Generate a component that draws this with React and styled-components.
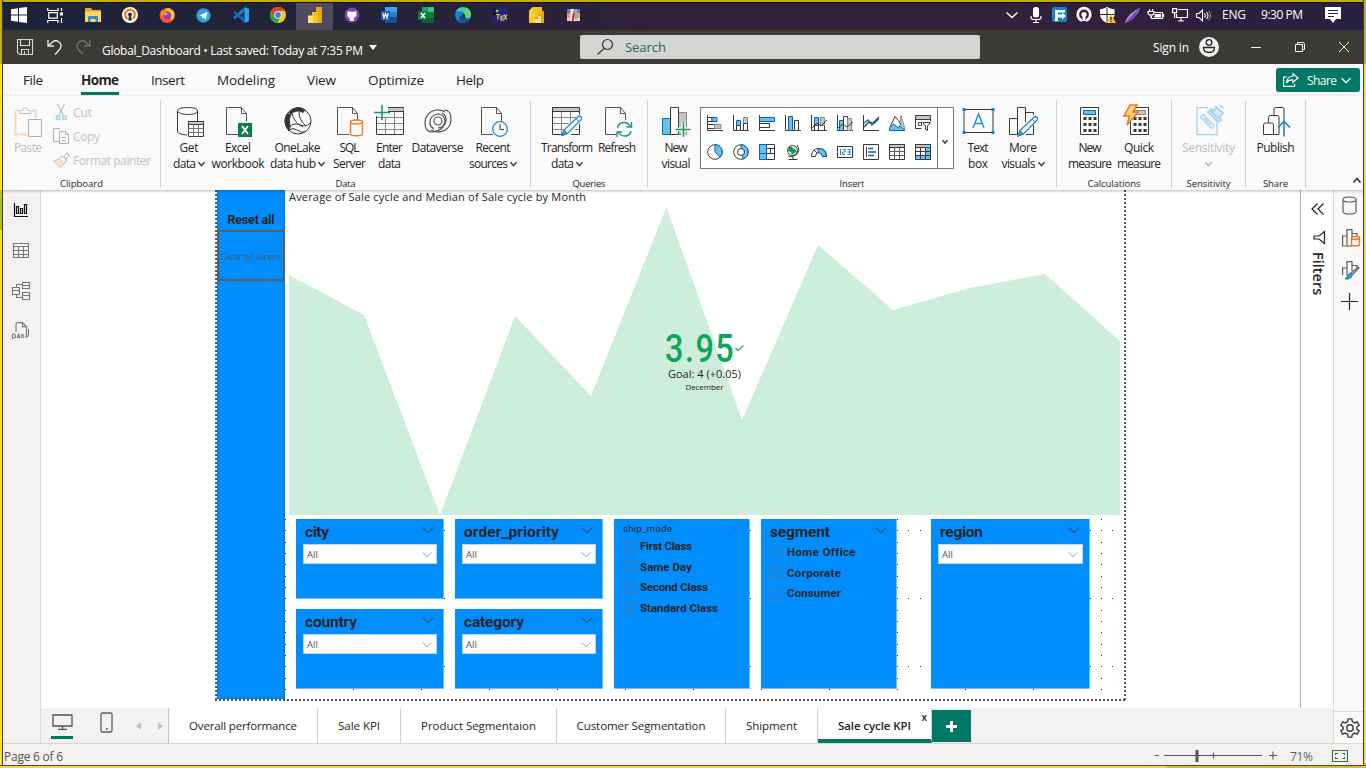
import React, { useLayoutEffect, useRef } from "react";
import styled, { createGlobalStyle, css } from "styled-components";

const GlobalStyle = createGlobalStyle`
  * { box-sizing: border-box; }
  body { margin: 0; background: #fff; font-family: "Open Sans", "Noto Sans", sans-serif; overflow: hidden; }
  svg { display: block; flex: none; overflow: visible; }
`;

/* ---------- text fitted to a set width ---------- */
const FitSpan = styled.span`
  display: inline-block;
  white-space: nowrap;
  width: ${(p) => p.$w}px;
  flex: none;
  text-align: left;
`;
function Fit({ w, children }) {
  const ref = useRef(null);
  useLayoutEffect(() => {
    const el = ref.current;
    el.style.letterSpacing = "0px";
    const range = document.createRange();
    range.selectNodeContents(el);
    const natural = range.getBoundingClientRect().width;
    el.style.letterSpacing = `${(w - natural) / Math.max(1, children.length - 1)}px`;
  }, [w, children]);
  return <FitSpan ref={ref} $w={w}>{children}</FitSpan>;
}

/* ---------- frame ---------- */
const Screen = styled.div`
  position: relative;
  width: 1366px;
  height: 768px;
  display: flex;
  flex-direction: column;
  overflow: hidden;
  background: #fff;
`;
const Edge = styled.div`
  position: absolute;
  pointer-events: none;
  z-index: 20;
  ${(p) => p.$side === "top" && css`top: 0; left: 0; right: 0; height: 3px; background: #c7ad14; border-bottom: 1px solid #14121c;`}
  ${(p) => p.$side === "left" && css`
    top: 0; bottom: 0; left: 0; width: 3px; border-right: 1px solid #3a3a30;
    background: linear-gradient(#c7ad14 64px, #fbdf35 64px, #fbdf35 190px, #b5bd22 190px, #b5bd22 230px, #fbdf35 230px);`}
  ${(p) => p.$side === "right" && css`
    top: 0; bottom: 0; right: 0; width: 3px; border-left: 1px solid #3a3a30;
    background: linear-gradient(#c7ad14 64px, #fbdf35 64px);`}
  ${(p) => p.$side === "bottom" && css`
    bottom: 0; left: 0; right: 0; height: 3px; border-top: 1px solid #4a4a42;
    background: linear-gradient(90deg, #f2dc3c 1167px, #d8c02c 1167px);`}
`;

/* ---------- taskbar ---------- */
const Taskbar = styled.div`
  height: 30px;
  flex: none;
  display: flex;
  align-items: stretch;
  background: linear-gradient(90deg, #1c2438 0%, #24233a 30%, #33203a 52%, #33203a 78%, #27203f 100%);
  color: #fff;
`;
const TaskCell = styled.div`
  width: 37px;
  display: flex;
  align-items: center;
  justify-content: center;
  background: ${(p) => (p.$active ? "#4f4a60" : "transparent")};
`;
const Tray = styled.div`
  margin-left: auto;
  width: 366px;
  display: flex;
  align-items: center;
  font-size: 12px;
`;
const TrayCell = styled.div`
  width: 24px;
  display: flex;
  justify-content: center;
`;
const TrayText = styled.div`
  margin-left: ${(p) => p.$gap}px;
  line-height: 16px;
`;

/* ---------- title bar ---------- */
const TitleBar = styled.div`
  height: 34px;
  flex: none;
  display: flex;
  align-items: center;
  background: #3b3a37;
  color: #fff;
  padding-left: 17px;
`;
const QuickIcons = styled.div`
  display: flex;
  gap: 14px;
  width: 85px;
`;
const FileTitle = styled.div`
  display: flex;
  align-items: center;
  gap: 6px;
  width: 478px;
  font-size: 12px;
  padding-top: 6px;
`;
const Caret = styled.i`
  border: 4.5px solid transparent;
  border-top: 5px solid #fff;
  border-bottom: 0;
  margin-top: -5px;
`;
const SearchBox = styled.div`
  width: 400px;
  height: 24px;
  background: #d4d4d2;
  border-radius: 2px;
  display: flex;
  align-items: center;
  padding-left: 17px;
  gap: 12px;
  font-size: 13px;
  color: #27675a;
`;
const WindowArea = styled.div`
  display: flex;
  align-items: center;
  margin-left: 173px;
  font-size: 12px;
`;
const WindowIcon = styled.div`
  margin-left: ${(p) => p.$gap}px;
`;

/* ---------- ribbon ---------- */
const MenuRow = styled.div`
  height: 32px;
  flex: none;
  display: flex;
  background: #fafafa;
  padding-left: 23px;
  font-size: 13.5px;
  color: #252423;
`;
const MenuItem = styled.div`
  height: 31px;
  line-height: 32px;
  margin-right: ${(p) => p.$gap}px;
  font-weight: ${(p) => (p.$active ? 700 : 400)};
  border-bottom: 3px solid ${(p) => (p.$active ? "#007864" : "transparent")};
`;
const ShareButton = styled.div`
  margin: 4px 6px 4px auto;
  width: 84px;
  height: 24px;
  background: #007864;
  border-radius: 3px;
  color: #fff;
  font-size: 12px;
  display: flex;
  align-items: center;
  padding-left: 7px;
`;
const ShareLabel = styled.span`
  margin: 0 4px 0 8px;
  display: flex;
`;
const Ribbon = styled.div`
  height: 94px;
  flex: none;
  display: flex;
  background: #fafafa;
  padding-left: 3px;
  position: relative;
  z-index: 5;
  box-shadow: 0 1px 3px rgba(0, 0, 0, 0.28);
  color: #252423;
`;
const Group = styled.div`
  width: ${(p) => p.$w}px;
  height: 88px;
  margin-top: 4px;
  border-right: 1px solid #d0cfce;
  display: flex;
  flex-direction: column;
`;
const GroupBody = styled.div`
  display: flex;
  height: 76px;
  padding-left: ${(p) => p.$pad}px;
`;
const GroupName = styled.div`
  font-size: 9.5px;
  line-height: 13px;
  height: 12px;
  display: flex;
  justify-content: center;
  padding-top: 1px;
`;
const BigButton = styled.div`
  width: ${(p) => p.$w}px;
  flex: none;
  display: flex;
  flex-direction: column;
  align-items: center;
  font-size: 12px;
  line-height: 16px;
  color: ${(p) => (p.$off ? "#bfbdbb" : "#252423")};
  padding-top: 7px;
`;
const BigIcon = styled.div`
  height: 33px;
  display: flex;
  align-items: flex-start;
`;
const DocSlot = styled.div`
  padding-left: 3px;
`;
const Line = styled.div`
  display: flex;
  align-items: center;
  gap: 2px;
  height: 16px;
`;
const ClipList = styled.div`
  display: flex;
  flex-direction: column;
  margin-left: 4px;
`;
const ClipRow = styled.div`
  display: flex;
  align-items: center;
  gap: 4px;
  height: 24px;
  font-size: 12px;
  color: #c3c1bf;
`;
const Gallery = styled.div`
  width: 254px;
  height: 62px;
  margin: 7px 3px 0 2px;
  border: 1px solid #7a7877;
  display: flex;
  background: #fff;
`;
const GalleryGrid = styled.div`
  width: 236px;
  padding: 0 0 0 1px;
  display: grid;
  grid-template-columns: repeat(9, 26px);
  grid-auto-rows: 29px;
  place-items: center;
`;
const GalleryMore = styled.div`
  flex: 1;
  border-left: 1px solid #7a7877;
  display: flex;
  align-items: center;
  justify-content: center;
  padding: 7px 2px 0 0;
`;
const Collapse = styled.div`
  margin: 82px 0 0 47px;
`;

/* ---------- workspace ---------- */
const Workspace = styled.div`
  height: 553px;
  flex: none;
  display: flex;
`;
const ViewRail = styled.div`
  width: 41px;
  background: #f3f2f1;
  border-right: 1px solid #dddbd9;
  display: flex;
  flex-direction: column;
  align-items: center;
  padding: 13px 0 0 1px;
`;
const ViewSlot = styled.div`
  height: 39.5px;
`;
const Middle = styled.div`
  width: 1292px;
  display: flex;
  flex-direction: column;
`;
const StageRow = styled.div`
  height: 518px;
  display: flex;
`;
const Stage = styled.div`
  width: 1259px;
  padding-left: 174px;
`;
const ReportPage = styled.div`
  width: 911px;
  height: 511px;
  padding: 0 2px 2px;
  display: flex;
  background:
    repeating-linear-gradient(180deg, #555 0 2px, transparent 2px 4px) 0 0 / 2px 100% no-repeat,
    repeating-linear-gradient(180deg, #555 0 2px, transparent 2px 4px) 100% 0 / 2px 100% no-repeat,
    repeating-linear-gradient(90deg, #555 0 2px, transparent 2px 4px) 0 100% / 100% 2px no-repeat;
`;
const BlueColumn = styled.div`
  width: 68px;
  background: #008eff;
  border-right: 1px solid #0a76cf;
  border-left: 1px solid #0a76cf;
  border-bottom: 1px solid #0a76cf;
  padding-top: 22px;
  display: flex;
  flex-direction: column;
  align-items: center;
`;
const ResetLabel = styled.div`
  font: 700 12.5px/16px Roboto, sans-serif;
  color: #252423;
  height: 18px;
`;
const ClearButton = styled.div`
  width: 68px;
  height: 51px;
  flex: none;
  border: 2px solid #605e5c;
  display: flex;
  align-items: center;
  justify-content: center;
  font: 400 9.5px/12px "Open Sans", sans-serif;
  padding-top: 2px;
  color: #4a5f76;
`;
const Visuals = styled.div`
  width: 839px;
  display: flex;
  flex-direction: column;
`;
const ChartTitle = styled.div`
  height: 17px;
  padding-left: 4px;
  font-size: 11px;
  line-height: 14px;
  color: #252423;
`;
const KpiArea = styled.div`
  position: relative;
  height: 308px;
  margin-left: 4px;
`;
const KpiOverlay = styled.div`
  position: absolute;
  left: 0;
  right: 4px;
  top: 122px;
  display: flex;
  flex-direction: column;
  align-items: center;
  color: #252423;
`;
const KpiValue = styled.div`
  display: flex;
  align-items: center;
  height: 38px;
  color: #0ea656;
`;
const KpiNumber = styled.div`
  font: 500 39px/38px Roboto, sans-serif;
  width: 70px;
  letter-spacing: 1.8px;
  transform: scaleX(0.83);
  transform-origin: 0 50%;
  padding-top: 1px;
`;
const KpiGoal = styled.div`
  font-size: 11px;
  line-height: 14px;
`;
const KpiMonth = styled.div`
  font-size: 8px;
  line-height: 12px;
`;
const SlicerArea = styled.div`
  position: relative;
  flex: 1;
  padding: 4px 0 0 11px;
  display: flex;
`;
const GridDots = styled.svg`
  position: absolute;
  left: 0;
  top: 0;
`;
const SlicerStack = styled.div`
  display: flex;
  flex-direction: column;
  gap: 10px;
  margin-right: ${(p) => p.$gap}px;
  position: relative;
`;
const SlicerCard = styled.div`
  width: ${(p) => p.$w}px;
  height: ${(p) => p.$h}px;
  background: #008eff;
  border-right: 1px solid #70bdfc;
  border-bottom: 1px solid #70bdfc;
  padding: ${(p) => (p.$small ? "4px 6px 0 7px" : "5px 6px 0 7px")};
`;
const SlicerHead = styled.div`
  display: flex;
  justify-content: space-between;
  height: ${(p) => p.$h}px;
  padding: 0 3px 0 2px;
  font: ${(p) => (p.$small ? "400 9.5px/11px" : "700 15.5px/17px")} Roboto, sans-serif;
  color: #252423;
`;
const HeadChevron = styled.div`
  padding-top: ${(p) => (p.$small ? 2 : 3)}px;
`;
const Dropdown = styled.div`
  height: 20px;
  background: #fff;
  border: 1px solid #b5d9f5;
  display: flex;
  align-items: center;
  justify-content: space-between;
  padding: 1px 4px 0 3px;
  font-size: 9.5px;
  color: #55534f;
`;
const CheckRow = styled.div`
  display: flex;
  align-items: center;
  gap: 5px;
  height: 20.6px;
  padding-left: 3px;
  font: 700 11.5px/16px Roboto, sans-serif;
  color: #252423;
`;
const CheckBox = styled.i`
  width: 11px;
  height: 11px;
  border: 1px solid #56789a;
`;
const FilterPane = styled.div`
  width: 33px;
  border-left: 1px solid #b3b1af;
  background: #fff;
  display: flex;
  flex-direction: column;
  align-items: center;
  padding-top: 13px;
`;
const FilterIcon = styled.div`
  margin: 16px 0 0 3px;
`;
const FilterText = styled.div`
  writing-mode: vertical-rl;
  font-size: 14.5px;
  font-weight: 600;
  line-height: 18px;
  margin: 8px 0 0 1px;
  color: #252423;
`;
const PaneRail = styled.div`
  width: 33px;
  background: #faf9f8;
  border-left: 1px solid #dddbd9;
  display: flex;
  flex-direction: column;
  padding: 6px 0 0 8px;
`;
const PaneSlot = styled.div`
  height: ${(p) => p.$h}px;
`;
const PlusSlot = styled.div`
  margin: -1px 0 0 -1px;
`;
const GearSlot = styled.div`
  margin: auto 0 0 -8px;
  height: 32px;
  border-top: 1px solid #dddbd9;
  padding: 5px 0 0 5px;
`;

/* ---------- page tabs ---------- */
const TabBar = styled.div`
  height: 35px;
  background: #f3f2f1;
  display: flex;
`;
const DeviceIcons = styled.div`
  width: 128px;
  display: flex;
  padding: 4px 0 0 10px;
  border-right: 1px solid #c8c6c4;
`;
const DeviceSlot = styled.div`
  width: 24px;
  height: 27px;
  margin-right: ${(p) => (p.$active ? 25 : 23)}px;
  border-bottom: 3px solid ${(p) => (p.$active ? "#007864" : "transparent")};
  padding: ${(p) => (p.$active ? "2px 0 0 1px" : "0 0 0 2px")};
`;
const PageArrow = styled.i`
  border: 4px solid transparent;
  ${(p) => (p.$dir === "left" ? "border-right: 5px solid #c4c2c0; border-left: 0;" : "border-left: 5px solid #c4c2c0; border-right: 0;")}
  height: 8px;
  margin: 10px 17px 0 0;
`;
const PageTab = styled.div`
  width: ${(p) => p.$w}px;
  background: #fff;
  border-right: 1px solid #d2d0ce;
  border-bottom: ${(p) => (p.$active ? "4px solid #007864" : "0")};
  display: flex;
  justify-content: center;
  font-size: 11.5px;
  font-weight: ${(p) => (p.$active ? 600 : 400)};
  line-height: 35px;
  color: #252423;
  position: relative;
`;
const CloseMark = styled.span`
  position: absolute;
  right: 4px;
  top: 3px;
  font-size: 10px;
  line-height: 12px;
  font-weight: 600;
`;
const AddTab = styled.div`
  width: 39px;
  height: 32px;
  margin-top: 2px;
  background: #007864;
  display: flex;
  align-items: center;
  justify-content: center;
`;

/* ---------- status bar ---------- */
const StatusBar = styled.div`
  height: 25px;
  background: #f3f2f1;
  border-top: 1px solid #d8d6d4;
  display: flex;
  align-items: center;
  padding: 0 18px 0 4px;
  font-size: 12px;
  color: #55534f;
`;
const ZoomArea = styled.div`
  margin-left: auto;
  display: flex;
  align-items: center;
  color: #605e5c;
`;
const Percent = styled.div`
  margin: 0 19px 0 14px;
`;

/* ---------- icons ---------- */
const Ico = ({ w = 16, h = w, vb, s = "#3b3a39", sw = 1, children }) => (
  <svg width={w} height={h} viewBox={vb || `0 0 ${w} ${h}`} fill="none" stroke={s} strokeWidth={sw}>{children}</svg>
);
const Chevron = ({ w = 8, h = 4, s = "#3b3a39", sw = 1.5 }) => (
  <Ico w={w} h={h} s={s} sw={sw}><path d={`M0.5 0.3 L${w / 2} ${h - 0.3} L${w - 0.5} 0.3`} /></Ico>
);
const BLUE = "#69bff0";
const DB = "#0a63ae";
const GR = "#c8c6c4";

const taskIcons = [
  <Ico w={16} s="none"><path fill="#fff" d="M0 2.3 7 1.3V7.5H0zM8 1.1 16 0V7.5H8zM0 8.5H7v6.2L0 13.7zM8 8.5h8V16L8 14.9z" /></Ico>,
  <Ico w={17} h={15} s="#fff" sw={1.2}><path d="M.7 0v2.500H11V0M1.700 4.600h8.600v5.600H1.700zM.7 15v-2.500H11V15M14.500 0v3M14.500 10v5" /><path d="M13 4.500h3v3h-3z" fill="#fff" stroke="none" /></Ico>,
  <Ico w={16} h={14} s="none"><path fill="#e7a52d" d="M0 0h6l1.500 2H16v5H0z" /><path fill="#ffd668" d="M0 3.500h16V14H0z" /><path fill="#3989cc" d="M3 14V9q0-1 1-1h8q1 0 1 1v5h-2.500v-3h-5v3z" /></Ico>,
  <Ico w={16} s="none"><circle cx="8" cy="8" r="8" fill="#fff" /><circle cx="8" cy="7.500" r="4.800" stroke="#ee7d23" strokeWidth="2.400" /><path fill="#fff" d="M5.500 10.500h5v4h-5z" /><circle cx="8" cy="7.500" r="2" fill="#20344f" /><path d="M7 8.500h2l.8 5H6.200z" fill="#20344f" /></Ico>,
  <Ico w={16} s="none"><circle cx="8" cy="8.500" r="7.500" fill="#ff4f3a" /><path d="M8 1q5.500 0 7.500 5 .8 5-3 8-1-9-7-10z" fill="#ffbd2e" /><path d="M2 4q2-1 4 0l3 2-2 5-5-2z" fill="#ff8a26" /><circle cx="8.300" cy="8.300" r="3.700" fill="#7a45d2" /><path d="M4 6q4-1 6 1-3 0-4 2z" fill="#ff9a2b" /></Ico>,
  <Ico w={15} s="none"><circle cx="7.500" cy="7.500" r="7.200" fill="#2ba2db" /><path d="M3 7.500 11.500 4 10 11.500 7 9.500 6 11V8.500z" fill="#fff" /></Ico>,
  <Ico w={16} s="none"><path d="M11.500 0 16 2v12l-4.500 2z" fill="#27a5ee" /><path d="M11.500 0v4.500L2 12 0 10.700z" fill="#1481c9" /><path d="M11.500 16v-4.500L2 4 0 5.300z" fill="#0d6cb4" /></Ico>,
  <Ico w={16} s="none"><circle cx="8" cy="8" r="8" fill="#f8c91c" /><path d="M1.100 4A8 8 0 0 0 7 16l3.500-6L8 8z" fill="#29a34f" /><path d="M8 4h7A8 8 0 0 0 1.100 4L4.500 10z" fill="#e34133" /><circle cx="8" cy="8" r="3.800" fill="#fff" /><circle cx="8" cy="8" r="2.900" fill="#3c7de6" /></Ico>,
  <Ico w={14} h={16} s="none"><path d="M8 0h6v16H8z" fill="#e8ad0c" /><path d="M4 5h6v11H4z" fill="#f3c624" /><path d="M0 8.500h5V16H0z" fill="#ffe06a" /></Ico>,
  <Ico w={16} s="none"><circle cx="8" cy="8" r="7.500" fill="#8240a8" /><path d="M3.800 4q1.200 0 2 .7h4.400q.8-.7 2-.7.3 1 0 1.800 1.500 4-2.400 5V14H6.200v-2.200q-2 .3-2.400-1.300 1 1 2.400.2c-3.200-.5-3.600-3-2.500-4.700Q3.500 5 3.800 4z" fill="#fff" /></Ico>,
  <Ico w={16} s="none"><path d="M4 0h12v5H4z" fill="#41a5ee" /><path d="M4 5h12v5H4z" fill="#2b7cd3" /><path d="M4 10h12v6H4z" fill="#174f9f" /><path d="M0 4h9v9H0z" fill="#185abd" /><path d="m1.800 6 1.200 5 1.500-4.500L6 11l1.200-5" stroke="#fff" strokeWidth="1.200" /></Ico>,
  <Ico w={16} s="none"><path d="M4 0h12v5H4z" fill="#21a366" /><path d="M10 0h6v5h-6z" fill="#33c481" /><path d="M4 5h12v6H4z" fill="#107c41" /><path d="M4 11h12v5H4z" fill="#185c37" /><path d="M0 4h10v9H0z" fill="#107c41" /><path d="m3 6 4 5M7 6l-4 5" stroke="#fff" strokeWidth="1.500" /></Ico>,
  <Ico w={16} s="none"><circle cx="8" cy="8" r="8" fill="#1487d4" /><path d="M1 4.500A8 8 0 0 1 16 8q0 3-4 3-3 0-2-2.500Q9 3 1 4.500z" fill="#42c7b3" /><path d="M10 .3A8 8 0 0 1 16 8q0 3-4 3-1 0-2-1 2-3-1-5z" fill="#61d869" /><path d="M5 15Q2 10 7 7.500q-2 5 7.500 5.200Q11 17 5 15z" fill="#0c4f9e" /><path d="M7.500 7q2-1 2.700 1.500-1 2.500 2 2.800Q8 12.500 7 10z" fill="#232238" /></Ico>,
  <Ico w={14} s="none"><path d="M0 0h14v14H0z" fill="#232089" /><path d="m0 0 6 3-2 3-4 2z" fill="#101038" /><circle cx="4" cy="3" r="1.500" fill="#83d83e" /><path d="M3 6.500h4M5 6.500v5M11 12H8V8h3M8 10h2.500M11 6.500l3 5M14 6.500l-3 5" stroke="#e3cb4d" strokeWidth="1.200" /></Ico>,
  <Ico w={15} h={16} s="none"><path d="M4 0h9v4h2v12H0V4z" fill="#f1c018" /><path d="M0 4h4v-4z" fill="#ffe073" /><path d="M0 4h6v11H0z" fill="#f8cd33" /><path d="M6 10h3V7h3V4h3v12H6z" fill="#e1a619" /><path d="M6 12h3V9h3v7H6z" fill="#ffe27c" /></Ico>,
  <Ico w={13} h={13} s="none"><path d="M0 0h13v12H0z" fill="#f3f0ee" /><path d="M0 0h3.500v4H0zM10 0h3v4h-3z" fill="#4d86cc" /><path d="M0 4h3.500v5H0zM10 4h3v5h-3z" fill="#ee9a6a" /><path d="M0 9h3.500v3H0zM10 9h3v3h-3z" fill="#c8d8ee" /><path d="M7.500 0 5 13M9 0v11" stroke="#8b8f8c" strokeWidth="1.500" /><path d="M7 4 5.800 13" stroke="#d01c1c" strokeWidth="1.800" /></Ico>,
];

const trayIcons = [
  <Ico w={12} h={6} s="#fff" sw={1.4}><path d="m.5.5 5.500 5 5.500-5" /></Ico>,
  <Ico w={12} h={16} s="#fff" sw={1.2}><rect x="3" y="0" width="6" height="10.500" rx="2.500" fill="#fff" stroke="none" /><path d="M1 9v1q0 2.500 2.500 2.500h5Q11 12.500 11 10V9M6 12.500V16M3 15.500h6" /></Ico>,
  <Ico w={16} s="none"><rect width="15" height="15" rx="2" fill="#1685bd" /><path d="M3 3h10v2.500H6v2h4V5.500l4 3.500-4 3.500v-2H6V14H3z" fill="#fff" /></Ico>,
  <Ico w={16} s="none"><circle cx="8" cy="7.500" r="6.300" stroke="#fff" strokeWidth="2.800" /><path fill="#2e203c" d="M5.800 11h4.400v5H5.800z" /><circle cx="8" cy="7.500" r="2.600" fill="#fff" /><path d="M7 8h2l.8 6H6.200z" fill="#fff" /></Ico>,
  <Ico w={16} s="none"><path d="M7 0Q10 2 14.500 2.200V8Q13.500 13 7 16 .5 13 0 8V2.200Q4 2 7 0z" fill="#fff" /><path d="M7 1v14M0 7.500h14" stroke="#211c30" /><path d="m11 7 5 9H6z" fill="#fcc41c" /><path d="M11 10v3M11 14v1" stroke="#222" strokeWidth="1.200" /></Ico>,
  <Ico w={15} h={15} s="none"><path d="M15 0Q13 9 4 11l-3 4-1-.5Q4 4 15 0z" fill="#b687ea" /><path d="M15 0Q8 5 1 15q7-3 9-6t5-9z" fill="#7a48bd" /></Ico>,
  <Ico w={16} h={12} s="#fff" sw={1.2}><path d="M6.500 3.500h8v6h-11V7" /><path d="M7 5h6v3.500H6z" fill="#fff" stroke="none" /><path d="M15.500 5v3M1.500 0v2.500M4.500 0v2.500M0 2.500h6v1.500q0 2-3 2t-3-2zM3 6v3" /></Ico>,
  <Ico w={16} h={14} s="#fff" sw={1.2}><path d="M6 1.500h9.500v8H4.500V6M9 9.500v3M6 13h6" /><path d="M.6.600h4v4h-4zM2.600 4.600V10" /></Ico>,
  <Ico w={16} h={13} s="#fff" sw={1.1}><path d="M.5 4.500h2.500L6.500 1v11L3 8.500H.5zM8.500 4.500q1.500 2 0 4M10.500 3q3 3.500 0 7" /><path d="M12.500 1.500q4 5 0 10" stroke="#8b8496" /></Ico>,
];

const Doc = ({ children }) => (
  <DocSlot>
    <Ico w={28} h={30}><path d="M15.500 .5H.5v27H12M15.500 .5l5 6v8M15.500 .5v6h5" stroke="#55534f" fill="none" />{children}</Ico>
  </DocSlot>
);
const Pencil = ({ x = 9, y = 9 }) => (
  <g transform={`translate(${x} ${y})`}><path d="M0 20 2 14.500 16 1.200q1.500-1.400 3 0t0 3L5.500 18z" fill="#fafafa" stroke="#1a86bd" strokeWidth="1.200" /><path d="m0 20 2-5.500L5.500 18z" fill="#3ea0dc" stroke="#1a86bd" /><path d="m14 3 3 3" stroke="#1a86bd" /></g>
);
const tableInner = "M.5 10.500h27M.5 16.500h27M.5 22.500h27M9.500 5v22.500M18.500 5v22.500";

const big = {
  paste: <Ico w={28} h={30} s="#c3c1bf"><path d="M5 3.500H1.500v24H13M18 3.500h3.500V12" stroke="#f7d5b6" strokeWidth="2" /><path d="M5.500 6.500v-3H9q0-3 2.500-3t2.500 3h3v3z" fill="#fafafa" /><path d="M14.500 12.500h13v17h-13z" fill="#fafafa" stroke="#b3b1af" /></Ico>,
  getData: <DocSlot><Ico w={28} h={30}><path d="M.5 4v20q0 3.500 9.500 4M20.500 4v10M.5 4q0-3.500 10-3.500t10 3.500-10 3.500S.5 7 .5 4z" /><path d="M11.500 14.500h15v15h-15z" fill="#fff" /><path d="M11.500 14.500h15v3h-15z" fill={GR} /><path d="M11.500 21.500h15M11.500 25.500h15M16.500 17.500v12M21.500 17.500v12" stroke="#7a7877" /></Ico></DocSlot>,
  excel: <Doc><path d="M12 16h14v14H12z" fill="#107c41" stroke="none" /><path d="m16 19 6 8M22 19l-6 8" stroke="#fff" strokeWidth="1.800" /></Doc>,
  lake: <Ico w={28} h={28}><circle cx="14" cy="14" r="13" /><path d="M5 5Q13-3 21 3l-2 2.500Q12 2 7 7z" fill="#333" /><path d="M3 7Q-2 16 5 24l1-5Q4 13 7 7z" fill="#333" /><path d="M8 6q2 10 11 14M15 5q0 8 7 14M27 15q-3 4-7 4-5-2-9-2-4 0-5 3M5 23q4-3 8 0t8 2" /></Ico>,
  sql: <Doc><path d="M13.500 15v12q0 1.800 6 1.800t6-1.800V15M13.500 15q0-2 6-2t6 2-6 2-6-2z" fill="#fafafa" stroke="#f0761f" strokeWidth="1.400" /></Doc>,
  enter: <Ico w={30} h={30}><g transform="translate(1 0)"><path d={tableInner} stroke="#8a8886" /><path d="M.5.500h27v27H.5zM9 .500h18.500v4H9z" /><path d="M9.500 1h18v3h-18z" fill={GR} stroke="none" /></g><path d="M-2 -1h15v11H-2z" fill="#fafafa" stroke="none" /><path d="M1.500 9v4" /><path d="M-1 5.500h16M7 -2v15" stroke="#14a05a" strokeWidth="1.600" /></Ico>,
  dataverse: <Ico w={28} h={28} sw={1.2} s="#55534f"><g transform="translate(0 2)"><path d="M21 3C12-2 1 3 1 14q0 9 7 9 12-1 13-11 0-6-7-7-7 1-8 7-1 5 4 8" /><path d="M7 21c9 5 20 0 20-11q0-9-7-9M14 19q7-1 8-7 1-5-4-8" /><circle cx="14" cy="12" r="4" /></g></Ico>,
  recent: <Doc><circle cx="19" cy="22" r="7.300" fill="#fafafa" stroke="#1a86bd" strokeWidth="1.300" /><path d="M19 17v5.500h4" stroke="#3b3a39" /></Doc>,
  transform: <Ico w={30} h={30}><path d={tableInner} stroke="#8a8886" /><path d="M.5.500h27v27H.5z" /><path d="M.5.500h27v4H.5z" fill={GR} /><path d="m10 30 3-10L28 7l4 4-15 19z" fill="#fafafa" stroke="none" /><Pencil x={10} y={8.500} /></Ico>,
  refresh: <Doc><circle cx="19" cy="22" r="9" fill="#fafafa" stroke="none" /><path d="M12.500 21q1-5.500 6.500-5.500 4 0 6.500 4M26.500 15v5h-5M26 24q-1 5-6.500 5-4 0-6.500-4M12 30v-5h5" stroke="#14a05a" strokeWidth="1.400" /></Doc>,
  newVisual: <Ico w={28} h={30}><path d="M.5 11.500h8v16h-8z" fill={BLUE} stroke={DB} /><path d="M16.500 5.500h8v22h-8z" fill={GR} stroke="#8a8886" /><path d="M8.500.500h8v27h-8z" fill="#fff" /><path d="M13.500 22.500h15M21.500 15v15" stroke="#fafafa" strokeWidth="4" /><path d="M13.500 22.500h15M21.500 15v15" stroke="#14a05a" strokeWidth="1.500" /></Ico>,
  textBox: <Ico w={32} h={28}><path d="M2 2.500h29v23H2z" /><path d="m11 21 5.500-14L22 21M13 16.500h7" stroke="#2392d0" strokeWidth="1.500" /><path d="M.5 1h3v3h-3zM29.500 1h3v3h-3zM.5 24h3v3h-3zM29.500 24h3v3h-3z" fill="#1481c9" stroke="none" /></Ico>,
  moreVisuals: <Ico w={28} h={30}><path d="M.5 11.500h8v16h-8zM8.500.500h8v27h-8zM16.500 5.500h8v22h-8z" fill="#fafafa" /><path d="m8 30 3-10L26 7l4 4-15 19z" fill="#fafafa" stroke="none" /><Pencil x={9} y={9} /></Ico>,
  calc: <Ico w={20} h={28}><path d="M.5.500h18v27H.5z" fill="#fff" /><path d="M3.500 3.500h12v4h-12z" fill={BLUE} stroke={DB} /><path d="M3.500 11.500h13M3.500 17.500h13M3.500 23.500h13" strokeWidth="3" strokeDasharray="3 2" /></Ico>,
  quick: <Ico w={30} h={30}><g transform="translate(6 0)"><path d="M.5.500h18v27H.5z" fill="#fff" /><path d="M3.500 3.500h12v4h-12z" fill={GR} stroke="#8a8886" /><path d="M3.500 11.500h13M3.500 17.500h13M3.500 23.500h13" strokeWidth="3" strokeDasharray="3 2" /></g><path d="M6-2h7L9 5h5L3 18l2.500-9H0z" fill="#ffd77a" stroke="#ee7420" strokeWidth="1.500" /></Ico>,
  sensitivity: <Ico w={26} h={30} s="#a5d4ee" sw={1.3}><path d="M12 .600H1v27h20V15" /><path d="m4.500 10 3-2.500L18 18.500l-2.500 3zM8 11l7 7" /><path d="m12 5 3-3 3 2 3-3 6 5-3 3 1 4-3 2z" fill="#d9edf6" strokeWidth="1.800" /><path d="m19-1 2 2M24-2l3 3M14 3l9 9" strokeWidth="2" /></Ico>,
  publish: <Ico w={26} h={30}><path d="M.5 18q0-2 2-2h6q2 0 2 2v9.500H.5zM5.500 15.500V10.500q0-2 2-2H14q2 0 2 2v17h-5M11 8V2.500q0-2 2-2h6q2 0 2 2V14" /><path d="M21 29.500V14.500M15 20.500l6-6 6 6" stroke="#1a86bd" strokeWidth="1.600" /></Ico>,
};

const axes = <path d="M.5 0v15.500H16" stroke="#3b3a39" />;
const galleryIcons = [
  <>{axes}<path d="M.5 2.500H5v4H.5zM.5 9.500h7v4h-7z" fill="#fff" /><path d="M5 2.500h5v4H5z" fill={BLUE} stroke={DB} /><path d="M7.500 9.500H14v4H7.500z" fill={GR} stroke="#8a8886" /></>,
  <>{axes}<path d="M3.500 5.500h4v10h-4z" fill={BLUE} stroke={DB} /><path d="M3.500 10.500h4v5h-4z" fill="#fff" /><path d="M10.500 2.500h4v6h-4z" fill={GR} stroke="#8a8886" /><path d="M10.500 8.500h4v7h-4z" fill="#fff" /></>,
  <>{axes}<path d="M.5 2.500h15v4H.5z" fill={BLUE} stroke={DB} /><path d="M.5 8.500h10v4H.5z" fill="#fff" /></>,
  <>{axes}<path d="M3.500 1.500h4v14h-4z" fill={BLUE} stroke={DB} /><path d="M9.500 5.500h4v10h-4z" fill="#fff" /></>,
  <>{axes}<path d="M3.500 2.500h4v8h-4z" fill={BLUE} stroke={DB} /><path d="M9.500 2.500h4v8h-4z" fill={GR} stroke="#8a8886" /><path d="M3.500 11V15M7.500 8v7M13.500 11v4M1 13l5-5 4 3 6-6" /></>,
  <>{axes}<path d="M2.500 5.500h4v10h-4z" fill={BLUE} stroke={DB} /><path d="M6.500 1.500h4v14h-4z" fill="#fff" /><path d="M10.500 3.500h4v12h-4z" fill={GR} stroke="#8a8886" /><path d="m1 13 5-4 4 3 6-5" /></>,
  <>{axes}<path d="m1 8 4-3 4 5 7-6" stroke="#0a7bbf" strokeWidth="1.400" /><path d="m1 12 5-5 4 1 6-6" strokeWidth="1.200" /></>,
  <><path d="M12 .5l3.500 12v3h-6z" fill={GR} stroke="#8a8886" /><path d="M1 12 6 1.500q4 4 6 8.500" fill="#fff" /><path d="M.5 15.500V13l4-4 5 4 2-2 4 4.500z" fill={BLUE} stroke={DB} /></>,
  <><path d="M.5.500h15V6M.5.500v13h6M.5 4.500h15M3.500 7.500h3v3h-3z" /><path d="M1 1h14v3H1z" fill={GR} stroke="none" /><path d="M7.500 7.500h8l-3 3.500v4.500l-2-1V11z" fill="#fff" /></>,
  <><circle cx="8" cy="8" r="7.300" fill="#fff" /><path d="M8 .7A7.300 7.300 0 0 1 13.300 13L8 8z" fill={BLUE} stroke={DB} /></>,
  <><circle cx="8" cy="8" r="7.300" fill="#fff" /><path d="M8 .7A7.300 7.300 0 0 1 10 15l-1-4a3.500 3.500 0 0 0-1-6.500z" fill={BLUE} stroke={DB} /><circle cx="8" cy="8" r="3.500" fill="#fff" /></>,
  <><path d="M.5.500h15v15H.5z" fill="#fff" /><path d="M.5.500h7v9h-7zM.5 9.500h7v6h-7z" fill={BLUE} stroke={DB} /><path d="M7.500 4.500h8M7.500 9.500h8M11.500 4.500v5" /></>,
  <><circle cx="7.500" cy="6.500" r="5" fill="#e8f6ee" /><path d="M4 3q3-1 4 1t2 1l2 3-3 1-2 2-1-3-3-1z" fill="#15995a" stroke="none" /><path d="M12 1q4 6-1 10-4 3-8 1M8 13v2.500M3.500 15.500h9" /></>,
  <><path d="M.5 12.500Q.5 4.500 8 4.500t7.500 8h-4Q11.500 8.500 8 8.500t-3.500 4z" fill="#fff" /><path d="M7 4.500q8 0 8.500 8h-4Q11 9 7 8.500z" fill={BLUE} stroke={DB} /><path d="m3 6 3 3" /></>,
  <><path d="M.5 2.500h15v11H.5z" fill="#fff" /><path d="M3.500 5v6M5.500 5.500H8v2.500H5.500v2.500H8M10.500 5.500H13v5h-2.500M10.500 8H13" stroke="#1481c9" /></>,
  <><path d="M.5.500h15v15H.5z" fill="#fff" /><path d="M3.500 3v10" /><path d="M5 4.500h5M5 8h8M5 11.500h6" stroke={DB} strokeWidth="1.700" /></>,
  <><path d="M.5.500h15v15H.5z" fill="#fff" /><path d="M.5.500h15v3H.5z" fill={GR} /><path d="M.5 7.500h15M.5 11.500h15M5.500 4v11.500M10.500 4v11.500" stroke="#605e5c" /></>,
  <><path d="M.5.500h15v15H.5z" fill="#fff" /><path d="M.5.500h15v3H.5z" fill={GR} /><path d="M10.500 3.500h5v12H.5v-4h10z" fill={BLUE} stroke={DB} /><path d="M.5 7.500h15M.5 11.500h15M5.500 4v11.500M10.500 4v11.500M.5.500h15v15H.5z" /></>,
];

const bigButtons = {
  data: [
    { w: 40, icon: big.getData, l: [["Get", 19], ["data", 23]], drop: true },
    { w: 58, icon: big.excel, l: [["Excel", 26], ["workbook", 53]] },
    { w: 61, icon: big.lake, l: [["OneLake", 46], ["data hub", 46]], drop: true },
    { w: 43, icon: big.sql, l: [["SQL", 20], ["Server", 33]] },
    { w: 37, icon: big.enter, l: [["Enter", 27], ["data", 23]] },
    { w: 59, icon: big.dataverse, l: [["Dataverse", 52]] },
    { w: 52, icon: big.recent, l: [["Recent", 35], ["sources", 39]], drop: true },
  ],
  queries: [
    { w: 56, icon: big.transform, l: [["Transform", 52], ["data", 23]], drop: true },
    { w: 44, icon: big.refresh, l: [["Refresh", 38]] },
  ],
  newVisual: [{ w: 44, icon: big.newVisual, l: [["New", 23], ["visual", 29]] }],
  insert: [
    { w: 42, icon: big.textBox, l: [["Text", 21], ["box", 20]] },
    { w: 48, icon: big.moreVisuals, l: [["More", 28], ["visuals", 34]], drop: true },
  ],
  calc: [
    { w: 50, icon: big.calc, l: [["New", 23], ["measure", 44]] },
    { w: 48, icon: big.quick, l: [["Quick", 30], ["measure", 44]] },
  ],
  sens: [{ w: 73, icon: big.sensitivity, l: [["Sensitivity", 53]], drop: true, off: true }],
  share: [{ w: 59, icon: big.publish, l: [["Publish", 38]] }],
};

function Buttons({ list }) {
  return list.map((b) => (
    <BigButton key={b.l[0][0]} $w={b.w} $off={b.off}>
      <BigIcon>{b.icon}</BigIcon>
      <Line><Fit w={b.l[0][1]}>{b.l[0][0]}</Fit></Line>
      {(b.l[1] || b.drop) && (
        <Line>
          {b.l[1] && <Fit w={b.l[1][1]}>{b.l[1][0]}</Fit>}
          {b.drop && <Chevron w={7} h={4} s={b.off ? "#b3b1af" : "#3b3a39"} />}
        </Line>
      )}
    </BigButton>
  ));
}

function RibbonGroup({ w, pad = 0, name, nameW, children }) {
  return (
    <Group $w={w}>
      <GroupBody $pad={pad}>{children}</GroupBody>
      <GroupName><Fit w={nameW}>{name}</Fit></GroupName>
    </Group>
  );
}

const menu = [["File", 20, 38], ["Home", 38, 32], ["Insert", 34, 32], ["Modeling", 58, 32], ["View", 29, 32], ["Optimize", 56, 32], ["Help", 28, 0]];
const clip = [
  ["Cut", 19, <Ico w={16} h={17} s="#b3b1af"><path d="m4.500 0 6 12M11.500 0l-6 12" /><path d="M3.500 12h3v3.500h-3zM10 12h3v3.500h-3z" stroke="#a5d4ee" strokeWidth="1.500" /></Ico>],
  ["Copy", 27, <Ico w={16} h={16} s="#b3b1af"><path d="M6 13.500H.5v-13H7M6.500 3.500h6l3 3v9h-9zM12.500 3.500v3h3M9 9.500h4M9 12.500h4" /></Ico>],
  ["Format painter", 78, <Ico w={16} h={15} s="#b3b1af"><path d="m6 6 3-3 5 4-3 4zM11 4l3-4 2 2-3 4" /><path d="m6 6 5 5-4 3.500L.5 8z" fill="#fbe0cc" stroke="#f0bf9c" /></Ico>],
];

function Slicer({ title, titleW, w, h }) {
  return (
    <SlicerCard $w={w} $h={h}>
      <SlicerHead $h={20}><Fit w={titleW}>{title}</Fit><HeadChevron><Chevron w={12} h={6} sw={1.1} s="#35506e" /></HeadChevron></SlicerHead>
      <Dropdown><Fit w={11}>All</Fit><Chevron w={10} h={5} sw={1} s="#8ba4b5" /></Dropdown>
    </SlicerCard>
  );
}
function CheckSlicer({ title, titleW, items, small }) {
  return (
    <SlicerCard $w={136} $h={170} $small={small}>
      <SlicerHead $small={small} $h={small ? 13 : 18}><Fit w={titleW}>{title}</Fit><HeadChevron $small={small}><Chevron w={small ? 9 : 12} h={small ? 5 : 6} sw={1.1} s={small ? "#3f6d9a" : "#35506e"} /></HeadChevron></SlicerHead>
      {items.map(([t, tw]) => <CheckRow key={t}><CheckBox /><Fit w={tw}>{t}</Fit></CheckRow>)}
    </SlicerCard>
  );
}

const dots = [];
for (let c = 0; c <= 12; c++) for (let r = 0; r <= 15; r++) dots.push([c * 68, 4 + r * 11.333]);
for (let r = 0; r < 3; r++) for (let c = 0; c <= 73; c++) dots.push([c * 11.333, 15.333 + r * 68]);

const pageTabs = [
  ["Overall performance", 108, 149], ["Sale KPI", 42, 83], ["Product Segmentaion", 115, 156],
  ["Customer Segmentation", 129, 169], ["Shipment", 51, 92],
];

const viewIcons = [
  <Ico w={14} h={14} s="#111" sw={1}><path d="M.5 0v13.500H14M2.500 3.500h2v7h-2zM6.500 5.500h2v5h-2zM10.500 1.500h2v9h-2z" strokeWidth="1.200" /></Ico>,
  <Ico w={16} h={15} s="#7a7877" sw={1.1}><path d="M.5.500h15v14H.5zM.5 3.500h15M.5 7.500h15M.5 11.500h15M5.500 3.500v11M10.500 3.500v11" /></Ico>,
  <Ico w={18} h={18} s="#7a7877" sw={1.1}><path d="M.5 5.500h7v7h-7zM.5 8.500h7M10.500.500h7v6h-7zM10.500 3.500h7M10.500 10.500h7v7h-7zM10.500 13.500h7M4.500 5.500v-3h6M4.500 12.500v3h6" /></Ico>,
  <Ico w={18} h={17} s="#7a7877" sw={1.1}><path d="M4 10V2.500Q4 .600 6 .600h4.500l4 4V13q0 2-1.500 2.500M10.500.600v4h4M16.500 7v5q0 2-1.500 3" /><path d="M.5 12v4h1q2 0 2-2t-2-2zM5 16l1.500-4L8 16M5.500 15h2M9 12l3 4M12 12l-3 4" /></Ico>,
];

export default function App() {
  return (
    <Screen>
      <GlobalStyle />
      <Edge $side="top" /><Edge $side="left" /><Edge $side="right" /><Edge $side="bottom" />

      <Taskbar>
        {taskIcons.map((ic, i) => <TaskCell key={i} $active={i === 8}>{ic}</TaskCell>)}
        <Tray>
          {trayIcons.map((ic, i) => <TrayCell key={i}>{ic}</TrayCell>)}
          <TrayText $gap={6}><Fit w={24}>ENG</Fit></TrayText>
          <TrayText $gap={15}><Fit w={42}>9:30 PM</Fit></TrayText>
          <TrayText $gap={22}>
            <Ico w={16} h={16} s="none"><path d="M0 0h16v12h-5l-3 4-3-4H0z" fill="#fff" /><path d="M3 3.500h10M3 6.500h10M3 9.500h6" stroke="#27203f" /></Ico>
          </TrayText>
        </Tray>
      </Taskbar>

      <TitleBar>
        <QuickIcons>
          <Ico w={16} h={16} s="#d8d7d5" sw={1.1}><path d="M.5.500h15v15h-13l-2-2zM3.500.500v6h9v-6M4.500 15.500v-5h7v5M7.500 12v3" /></Ico>
          <Ico w={15} h={16} s="#e8e7e6" sw={1.4}><path d="M1 1v6h6M1 7l4.500-4Q8.500.500 12 3t1 7l-5 5.500" /></Ico>
          <Ico w={15} h={16} s="#73716e" sw={1.4}><path d="M14 1v6H8M14 7 9.500 3Q6.500.500 3 3T2 10l5 5.500" /></Ico>
        </QuickIcons>
        <FileTitle><Fit w={261}>Global_Dashboard • Last saved: Today at 7:35 PM</Fit><Caret /></FileTitle>
        <SearchBox>
          <Ico w={16} h={16} s="#3b3a39" sw={1.2}><circle cx="10.500" cy="5.500" r="5" /><path d="M7 9.500.5 15.500" /></Ico>
          <Fit w={41}>Search</Fit>
        </SearchBox>
        <WindowArea>
          <Fit w={36}>Sign in</Fit>
          <WindowIcon $gap={10}>
            <Ico w={20} h={20} s="#222" sw={1.3}><circle cx="10" cy="10" r="10" fill="#f3f2f1" stroke="none" /><circle cx="10" cy="5.500" r="2.800" /><path d="M4.500 10.500h11q0 5-5.500 5t-5.500-5z" /></Ico>
          </WindowIcon>
          <WindowIcon $gap={32}><Ico w={10} h={10} s="#fff"><path d="M0 5.500h10" /></Ico></WindowIcon>
          <WindowIcon $gap={34}><Ico w={10} h={10} s="#fff"><path d="M.5 2.500h7v7h-7zM2.500 2.500V.500h5q2 0 2 2v5h-2" /></Ico></WindowIcon>
          <WindowIcon $gap={34}><Ico w={10} h={10} s="#fff"><path d="m0 0 10 10M10 0 0 10" /></Ico></WindowIcon>
        </WindowArea>
      </TitleBar>

      <MenuRow>
        {menu.map(([t, w, g]) => <MenuItem key={t} $gap={g} $active={t === "Home"}><Fit w={w}>{t}</Fit></MenuItem>)}
        <ShareButton>
          <Ico w={16} h={14} s="#fff" sw={1.2}><path d="M4 4H.6v9.400h11V11M10 .600 15 5l-5 4.500V7Q5.500 6.500 3.500 10 4 3.500 10 3z" /></Ico>
          <ShareLabel><Fit w={30}>Share</Fit></ShareLabel>
          <Chevron w={10} h={5} s="#fff" sw={1.3} />
        </ShareButton>
      </MenuRow>

      <Ribbon>
        <RibbonGroup w={158} pad={4} name="Clipboard" nameW={43}>
          <BigButton $w={42} $off><BigIcon>{big.paste}</BigIcon><Line><Fit w={28}>Paste</Fit></Line></BigButton>
          <ClipList>{clip.map(([t, w, ic]) => <ClipRow key={t}>{ic}<Fit w={w}>{t}</Fit></ClipRow>)}</ClipList>
        </RibbonGroup>
        <RibbonGroup w={370} pad={8} name="Data" nameW={20}><Buttons list={bigButtons.data} /></RibbonGroup>
        <RibbonGroup w={117} pad={8} name="Queries" nameW={33}><Buttons list={bigButtons.queries} /></RibbonGroup>
        <RibbonGroup w={409} pad={6} name="Insert" nameW={25}>
          <Buttons list={bigButtons.newVisual} />
          <Gallery>
            <GalleryGrid>{galleryIcons.map((ic, i) => <Ico key={i} w={16} h={16}>{ic}</Ico>)}</GalleryGrid>
            <GalleryMore><Chevron w={6} h={3.5} /></GalleryMore>
          </Gallery>
          <Buttons list={bigButtons.insert} />
        </RibbonGroup>
        <RibbonGroup w={115} pad={8} name="Calculations" nameW={53}><Buttons list={bigButtons.calc} /></RibbonGroup>
        <RibbonGroup w={74} name="Sensitivity" nameW={44}><Buttons list={bigButtons.sens} /></RibbonGroup>
        <RibbonGroup w={60} name="Share" nameW={25}><Buttons list={bigButtons.share} /></RibbonGroup>
        <Collapse><Ico w={8} h={5} sw={1.8}><path d="m.5 4.500 3.500-4 3.500 4" /></Ico></Collapse>
      </Ribbon>

      <Workspace>
        <ViewRail>{viewIcons.map((ic, i) => <ViewSlot key={i}>{ic}</ViewSlot>)}</ViewRail>
        <Middle>
          <StageRow>
            <Stage>
              <ReportPage>
                <BlueColumn>
                  <ResetLabel><Fit w={47}>Reset all</Fit></ResetLabel>
                  <ClearButton><Fit w={60}>Clear all slicers</Fit></ClearButton>
                </BlueColumn>
                <Visuals>
                  <ChartTitle><Fit w={297}>Average of Sale cycle and Median of Sale cycle by Month</Fit></ChartTitle>
                  <KpiArea>
                    <svg width="831" height="308" viewBox="0 0 831 308">
                      <path fill="#cdeedc" d="M0 68 75 108 151 308 226 109 302 189 377.500 0 453 213 529 38 604 103 680 81 756 67 831 134V308H0z" />
                    </svg>
                    <KpiOverlay>
                      <KpiValue>
                        <KpiNumber>3.95</KpiNumber>
                        <Ico w={9} h={7} s="#2f9c4a" sw={1.2}><path d="m.5 3 2.500 2.500L8.500.500" /></Ico>
                      </KpiValue>
                      <KpiGoal><Fit w={73}>Goal: 4 (+0.05)</Fit></KpiGoal>
                      <KpiMonth><Fit w={38}>December</Fit></KpiMonth>
                    </KpiOverlay>
                  </KpiArea>
                  <SlicerArea>
                    <GridDots width="839" height="184" fill="#333">
                      {dots.map(([x, y], i) => <rect key={i} x={Math.round(x)} y={Math.round(y)} width="1" height="1" />)}
                    </GridDots>
                    <SlicerStack $gap={11}>
                      <Slicer title="city" titleW={24} w={148} h={80} />
                      <Slicer title="country" titleW={52} w={148} h={80} />
                    </SlicerStack>
                    <SlicerStack $gap={11}>
                      <Slicer title="order_priority" titleW={95} w={148} h={80} />
                      <Slicer title="category" titleW={60} w={148} h={80} />
                    </SlicerStack>
                    <SlicerStack $gap={11}>
                      <CheckSlicer small title="ship_mode" titleW={49} items={[["First Class", 52], ["Same Day", 52], ["Second Class", 68], ["Standard Class", 78]]} />
                    </SlicerStack>
                    <SlicerStack $gap={34}>
                      <CheckSlicer title="segment" titleW={60} items={[["Home Office", 68], ["Corporate", 54], ["Consumer", 54]]} />
                    </SlicerStack>
                    <SlicerStack $gap={0}>
                      <Slicer title="region" titleW={43} w={159} h={170} />
                    </SlicerStack>
                  </SlicerArea>
                </Visuals>
              </ReportPage>
            </Stage>
            <FilterPane>
              <Ico w={13} h={12} s="#252423" sw={1.2}><path d="m6.500.500-5.500 5.500 5.500 5.500M12.500.500 7 6l5.500 5.500" /></Ico>
              <FilterIcon><Ico w={12} h={13} s="#252423" sw={1.2}><path d="M11.500.500v12L6 8H1V5h5z" /></Ico></FilterIcon>
              <FilterText>Filters</FilterText>
            </FilterPane>
          </StageRow>
          <TabBar>
            <DeviceIcons>
              <DeviceSlot $active><Ico w={21} h={16} s="#55534f" sw={1.3}><path d="M1 1h19v11H1zM10.500 12v3M6 15.300h9" /></Ico></DeviceSlot>
              <DeviceSlot><Ico w={13} h={21} s="#605e5c" sw={1.3}><rect x="1" y="1" width="11" height="19" rx="1.500" /><path d="M6 17h2" /></Ico></DeviceSlot>
              <PageArrow $dir="left" /><PageArrow $dir="right" />
            </DeviceIcons>
            {pageTabs.map(([t, w, cw]) => <PageTab key={t} $w={cw}><Fit w={w}>{t}</Fit></PageTab>)}
            <PageTab $w={114} $active><Fit w={73}>Sale cycle KPI</Fit><CloseMark>x</CloseMark></PageTab>
            <AddTab><Ico w={11} h={11} s="#fff" sw={3}><path d="M5.500 0v11M0 5.500h11" /></Ico></AddTab>
          </TabBar>
        </Middle>
        <PaneRail>
          <PaneSlot $h={33}><Ico w={15} h={19} s="#605e5c" sw={1.2}><path d="M1 3.500v12Q1 18 7.500 18t6.500-2.500v-12M1 3.500Q1 1 7.500 1T14 3.500 7.500 6 1 3.500z" /></Ico></PaneSlot>
          <PaneSlot $h={32}><Ico w={18} h={18} s="#605e5c" sw={1.2}><path d="M.6 7H5v10H.6zM5 .600h5V17H5zM10 4.500h5V7" /><path d="M9.500 9v6.500q0 1.500 4 1.500t4-1.500V9q0-1.500-4-1.500T9.500 9q0 1.500 4 1.500t4-1.500" stroke="#f0761f" fill="#faf9f8" strokeWidth="1.400" /></Ico></PaneSlot>
          <PaneSlot $h={33}><Ico w={18} h={19} s="#605e5c" sw={1.2}><path d="M.6 14V7H5v7M5 10V.600h5V10M10 4.500h5V7" /><path d="m17 7-7 7-2-1 8-7z" fill="#fff" /><path d="M10 14q-1 4-7 4 2-1 2.500-3T9 12z" fill="#3ea0dc" stroke="#1a86bd" /></Ico></PaneSlot>
          <PlusSlot><Ico w={17} h={17} s="#252423" sw={1.2}><path d="M8.500 0v17M0 8.500h17" /></Ico></PlusSlot>
          <GearSlot>
            <Ico w={22} h={22} vb="0 0 24 24" s="#3b3a39" sw={1.5}><circle cx="12" cy="12" r="3.500" /><path d="m10 2-.5 3-2.500 1.500L4 5.300 2 9l2.500 2v2.500L2 15l2 3.700L7 17.500 9.500 19l.5 3h4l.5-3 2.500-1.500 3 1.200 2-3.700-2.500-1.500V11L22 9l-2-3.700-3 1.200L14.500 5 14 2z" /></Ico>
          </GearSlot>
        </PaneRail>
      </Workspace>

      <StatusBar>
        <Fit w={59}>Page 6 of 6</Fit>
        <ZoomArea>
          <Ico w={122} h={14} s="#55534f" sw={1.1}>
            <path d="M1 6.500h4M10 6.500h98M59.500 3.500v6M115 6.500h8M119 2.500v8" />
            <path d="M43 1v12" strokeWidth="3" />
          </Ico>
          <Percent><Fit w={23}>71%</Fit></Percent>
          <Ico w={16} h={12} s="#3f6b4a" sw={1.1}><path d="M.5.500h15v11H.5zM3.500 5V3.500H6M10.500 3.500h2V5M12.500 7v1.500h-2M6 8.500H3.500V7" /></Ico>
        </ZoomArea>
      </StatusBar>
    </Screen>
  );
}
